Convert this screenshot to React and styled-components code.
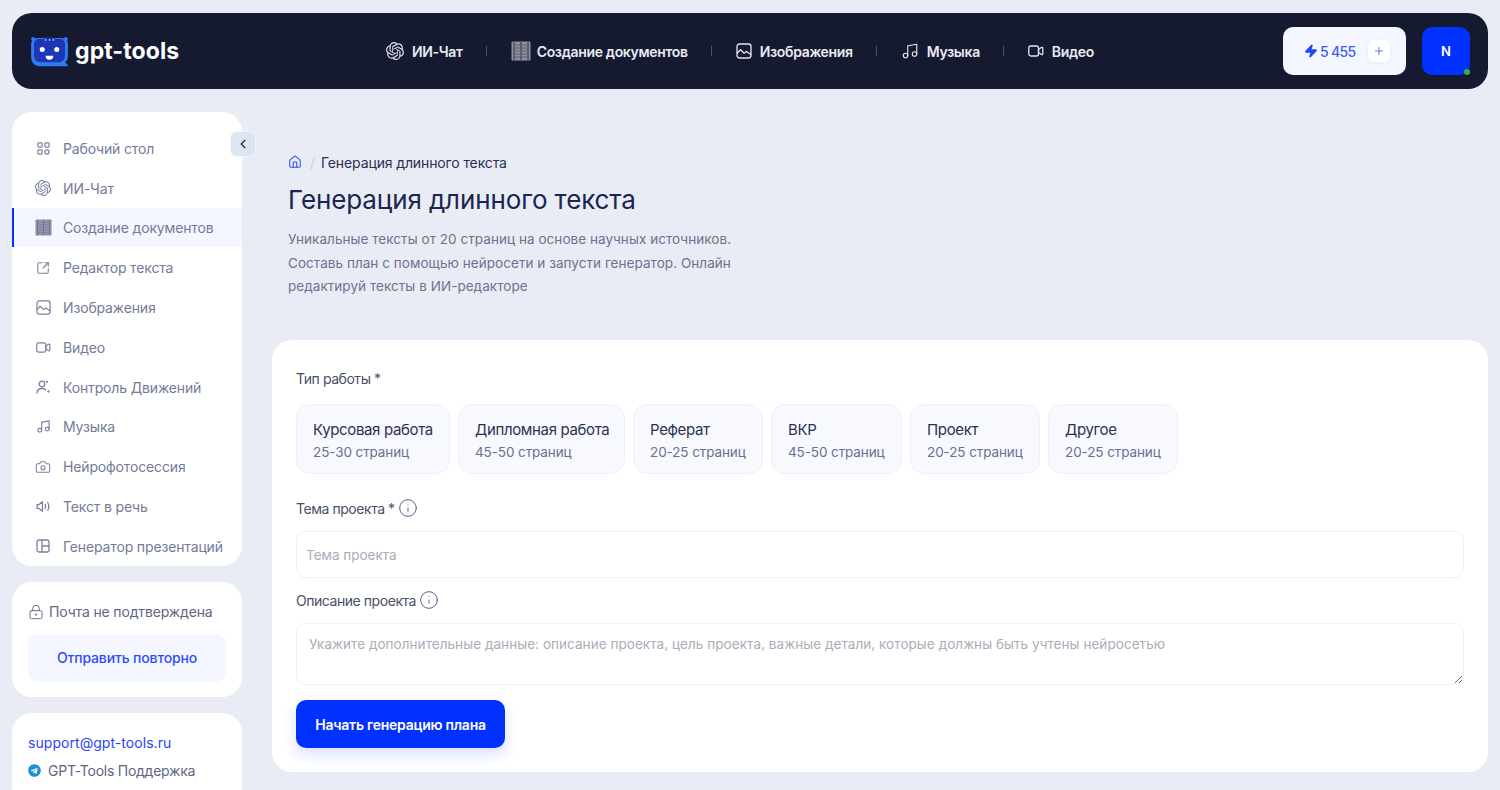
import React from "react";
import styled, { createGlobalStyle } from "styled-components";
import { SiOpenai } from "react-icons/si";
import { FaTelegram } from "react-icons/fa";
import {
  Camera,
  ChevronLeft,
  Info,
  LockKeyhole,
  Music,
  Plus,
  SquareArrowOutUpRight,
  Zap,
  House,
} from "lucide-react";

const GlobalStyle = createGlobalStyle`
  html, body {
    margin: 0;
    height: 790px;
    overflow: hidden;
    background: #e9ecf4;
    font-family: "Inter", "Noto Sans", sans-serif;
    color: #1c2340;
  }
  * { box-sizing: border-box; }
`;

const Page = styled.div`
  padding: 13px 12px 0;
`;

const Header = styled.header`
  height: 76px;
  background: #151a30;
  border-radius: 20px;
  padding: 0 18px;
  display: flex;
  align-items: center;
  justify-content: space-between;
`;

const LogoWrap = styled.div`
  display: flex;
  align-items: center;
  gap: 6px;
  width: 167px;
  color: #fff;
  font-weight: 700;
  font-size: 23px;
  letter-spacing: 0.1px;
`;

const TopNav = styled.nav`
  display: flex;
  align-items: center;
`;

const TopLink = styled.a`
  display: flex;
  align-items: center;
  gap: ${(p) => p.$gap || 8}px;
  color: #e9ebf2;
  font-size: 14px;
  font-weight: 600;
  letter-spacing: -0.33px;
  white-space: nowrap;
`;

const TopSep = styled.span`
  width: 1px;
  height: 10px;
  background: #4a5272;
  margin: 0 24px 0 23px;
`;

const HeaderRight = styled.div`
  display: flex;
  gap: 16px;
`;

const Balance = styled.div`
  width: 123px;
  height: 48px;
  background: #f4f7ff;
  border-radius: 10px;
  padding: 0 16px 0 21px;
  display: flex;
  align-items: center;
  justify-content: space-between;
  color: #3f5cf0;
  font-size: 14px;
  font-weight: 500;
  letter-spacing: -0.7px;
`;

const BalanceValue = styled.span`
  display: flex;
  align-items: center;
  gap: 2px;
`;

const PlusButton = styled.span`
  width: 22px;
  height: 22px;
  border-radius: 6px;
  background: #fff;
  display: flex;
  align-items: center;
  justify-content: center;
  box-shadow: 0 1px 4px rgba(70, 90, 200, 0.08);
`;

const Avatar = styled.div`
  position: relative;
  width: 48px;
  height: 48px;
  border-radius: 10px;
  background: #0031ff;
  color: #fff;
  font-size: 13px;
  font-weight: 600;
  display: flex;
  align-items: center;
  justify-content: center;
`;

const OnlineDot = styled.span`
  position: absolute;
  right: 0;
  bottom: 0;
  width: 6px;
  height: 6px;
  border-radius: 50%;
  background: #2fb344;
`;

const Columns = styled.div`
  display: flex;
  gap: 30px;
  margin-top: 23px;
  align-items: flex-start;
`;

const Aside = styled.aside`
  position: relative;
  width: 230px;
  flex: none;
  display: flex;
  flex-direction: column;
  gap: 16px;
`;

const SideCard = styled.div`
  background: #fff;
  border-radius: 20px;
  padding: ${(p) => p.$pad || "16px"};
`;

const MenuRow = styled.a`
  height: 39.8px;
  display: flex;
  align-items: center;
  gap: 13px;
  padding: 1px 0 0 22px;
  font-size: 14px;
  font-weight: 400;
  letter-spacing: -0.15px;
  color: #747a9a;
  white-space: nowrap;
  background: ${(p) => (p.$active ? "#f4f7ff" : "transparent")};
  border-left: 2px solid ${(p) => (p.$active ? "#0031ff" : "transparent")};
`;

const MenuIcon = styled.span`
  width: 14px;
  height: 16px;
  display: flex;
  align-items: center;
  justify-content: center;
  flex: none;
  & > svg {
    flex: none;
  }
`;

const Collapse = styled.button`
  position: absolute;
  top: 19px;
  right: -14px;
  width: 26px;
  height: 26px;
  padding: 0;
  border-radius: 7px;
  border: 1px solid #f2f5fa;
  background: #dde6f0;
  color: #1c2340;
  display: flex;
  align-items: center;
  justify-content: center;
`;

const MailNote = styled.div`
  display: flex;
  align-items: center;
  gap: 5px;
  color: #5f6684;
  font-size: 14px;
  letter-spacing: -0.15px;
  height: 20px;
`;

const ResendButton = styled.button`
  width: 198px;
  height: 48px;
  margin-top: 12px;
  border: 0;
  border-radius: 10px;
  background: #f4f7ff;
  color: #2e4df5;
  font: 500 14px "Inter", sans-serif;
  letter-spacing: -0.15px;
`;

const SupportMail = styled.div`
  color: #2b45f5;
  font-size: 14px;
  letter-spacing: 0.05px;
`;

const SupportChat = styled.div`
  display: flex;
  align-items: center;
  gap: 7px;
  margin-top: 11px;
  color: #5f6684;
  font-size: 14px;
  letter-spacing: -0.25px;
`;

const Main = styled.main`
  flex: 1;
  min-width: 0;
`;

const Intro = styled.section`
  padding: 41px 0 0 16px;
  height: 228px;
`;

const Crumbs = styled.div`
  display: flex;
  align-items: center;
  font-size: 14px;
  font-weight: 400;
  letter-spacing: -0.12px;
  height: 18px;
  color: #2a3050;
`;

const CrumbSlash = styled.span`
  color: #c6cfe3;
  margin: 0 6px 0 8px;
`;

const Title = styled.h1`
  margin: 10px 0 0;
  font-size: 26px;
  line-height: 38px;
  font-weight: 400;
  letter-spacing: -0.12px;
  color: #1a2550;
`;

const Lead = styled.p`
  margin: 9px 0 0;
  width: 450px;
  font-size: 13.5px;
  line-height: 23.5px;
  letter-spacing: 0.05px;
  color: #6b7390;
`;

const FormCard = styled.form`
  background: #fff;
  border-radius: 20px;
  height: 432px;
  padding: 28px 24px 0;
`;

const Label = styled.label`
  display: flex;
  align-items: center;
  gap: 3px;
  height: 20px;
  font-size: 14px;
  letter-spacing: -0.45px;
  color: #4a5068;
`;

const Chips = styled.div`
  display: flex;
  gap: 8px;
  margin: 16px 0 24px;
`;

const Chip = styled.div`
  height: 70px;
  width: ${(p) => p.$w}px;
  padding: 15px 0 0 16px;
  background: #f8f9ff;
  border: 1px solid #eef0fc;
  border-radius: 14px;
  white-space: nowrap;
`;

const ChipTitle = styled.div`
  font-size: 15px;
  line-height: 20px;
  letter-spacing: -0.35px;
  color: #2c3150;
`;

const ChipNote = styled.div`
  margin-top: 3px;
  font-size: 13.5px;
  line-height: 18px;
  letter-spacing: -0.1px;
  color: #69708f;
`;

const TextInput = styled.input`
  display: block;
  width: 100%;
  height: 47px;
  margin: 13px 0 12px;
  padding: 0 9px;
  border: 1px solid #f0f1f8;
  border-radius: 10px;
  background: #fff;
  font: 13.5px "Inter", sans-serif;
  outline: none;
  &::placeholder { color: #a9adb8; }
`;

const TextArea = styled.textarea`
  display: block;
  width: 100%;
  height: 62px;
  margin: 13px 0 15px;
  padding: 12px;
  border: 1px solid #f0f1f8;
  border-radius: 10px;
  background: #fff;
  font: 13.5px "Inter", sans-serif;
  letter-spacing: 0.055px;
  outline: none;
  &::placeholder { color: #a9adb8; }
`;

const StartButton = styled.button`
  width: 209px;
  height: 48px;
  border: 0;
  border-radius: 10px;
  background: #0031ff;
  color: #fff;
  font: 600 14px "Inter", sans-serif;
  letter-spacing: -0.25px;
  box-shadow: 0 6px 14px rgba(0, 49, 255, 0.16);
`;

const LogoMark = () => (
  <svg width="39" height="31" viewBox="0 0 40 32">
    <circle cx="3" cy="3" r="2" fill="#2f7bf5" />
    <circle cx="37" cy="3" r="2" fill="#2f7bf5" />
    <path d="M7 2h26a6 6 0 0 1 6 6v13a7 7 0 0 1-3 6l3 3a.8.8 0 0 1-.6 1.300H10a9 9 0 0 1-9-9V8a6 6 0 0 1 6-6z" fill="#2f7bf5" />
    <path d="M14 3l1-1.500h10l1 1.500h5a5 5 0 0 1 5 5v13a6 6 0 0 1-6 6H10a6 6 0 0 1-6-6V8a5 5 0 0 1 5-5z" fill="#1c36b4" />
    <circle cx="16" cy="4" r=".9" fill="#a9c4ff" />
    <circle cx="20" cy="4" r=".9" fill="#a9c4ff" />
    <circle cx="24" cy="4" r=".9" fill="#a9c4ff" />
    <circle cx="12.500" cy="14" r="2.600" fill="#fff" />
    <circle cx="27.500" cy="14" r="2.600" fill="#fff" />
    <path d="M16 20.500h8a4 4 0 0 1-8 0z" fill="#fff" />
  </svg>
);

const DocsIcon = ({ size, color, line }) => (
  <svg width={size} height={size} viewBox="0 0 20 20">
    <rect x=".5" y=".5" width="19" height="19" rx="1" fill={color} />
    <g stroke={line} strokeWidth="1">
      <path d="M10 1v18M3 1v18M17 1v18" />
      <path d="M4 4h5M4 7h5M4 10h5M4 13h5M4 16h5M11 4h5M11 7h5M11 10h5M11 13h5M11 16h5" opacity=".5" />
    </g>
  </svg>
);

const ImageIcon = ({ size = 16, color }) => (
  <svg width={size} height={size} viewBox="0 0 16 16" fill="none" stroke={color} strokeWidth="1.300" strokeLinejoin="round" strokeLinecap="round">
    <rect x="1" y="1" width="14" height="14" rx="2.500" />
    <path d="M1.200 10l3.300-3.300 3.500 3.500 2.500-1.700 4.300 3" />
  </svg>
);

const VideoIcon = ({ size = 16, color }) => (
  <svg width={size} height={size} viewBox="0 0 16 16" fill="none" stroke={color} strokeWidth="1.300" strokeLinejoin="round">
    <rect x=".8" y="3" width="9.700" height="10" rx="2" />
    <path d="M10.500 6.500L13 4.800a1 1 0 0 1 1.800.8v4.800a1 1 0 0 1-1.800.8L10.500 9.500z" />
  </svg>
);

const GridIcon = ({ color }) => (
  <svg width="13" height="13" viewBox="0 0 14 14" fill="none" stroke={color} strokeWidth="1.300">
    <rect x="1" y="1" width="4.500" height="4.500" rx=".8" />
    <rect x="8.500" y="1" width="4.500" height="4.500" rx=".8" />
    <rect x="1" y="8.500" width="4.500" height="4.500" rx=".8" />
    <circle cx="10.750" cy="10.750" r="2.250" />
  </svg>
);

const MotionIcon = ({ color }) => (
  <svg width="14" height="14" viewBox="0 0 14 14" fill="none" stroke={color} strokeWidth="1.300" strokeLinecap="round">
    <circle cx="6" cy="4" r="2.800" />
    <path d="M1 13c.3-3 2.400-4.500 5-4.500 1.500 0 2.700.4 3.600 1.300" />
    <circle cx="11" cy="1.800" r=".5" />
    <circle cx="12.500" cy="11.500" r=".5" />
  </svg>
);

const SpeechIcon = ({ color }) => (
  <svg width="15" height="15" viewBox="0 0 14 14" fill="none" stroke={color} strokeWidth="1.200" strokeLinejoin="round" strokeLinecap="round">
    <path d="M1 5.200h1.800L6 2.500v9L2.800 8.800H1z" />
    <path d="M8.500 5c.6 1.300.6 2.700 0 4M11 3.500c1.200 2.300 1.200 4.700 0 7" />
  </svg>
);

const SlidesIcon = ({ color }) => (
  <svg width="14" height="14" viewBox="0 0 14 14" fill="none" stroke={color} strokeWidth="1.300" strokeLinejoin="round">
    <rect x="1" y="1" width="12" height="12" rx="2" />
    <path d="M6 1v12M6 7h7" />
  </svg>
);

const muted = "#7b81a0";

const topLinks = [
  { label: "ИИ-Чат", icon: <SiOpenai size={18} color="#dfe2ea" /> },
  { label: "Создание документов", gap: 6, icon: <DocsIcon size={20} color="#8d909c" line="#2a2e40" /> },
  { label: "Изображения", icon: <ImageIcon color="#e4e6ee" /> },
  { label: "Музыка", icon: <Music size={18} color="#e4e6ee" strokeWidth={1.500} /> },
  { label: "Видео", icon: <VideoIcon color="#e4e6ee" /> },
];

const menu = [
  { label: "Рабочий стол", icon: <GridIcon color={muted} /> },
  { label: "ИИ-Чат", icon: <SiOpenai size={16} color={muted} /> },
  { label: "Создание документов", icon: <DocsIcon size={17} color="#9196ae" line="#666b88" />, active: true },
  { label: "Редактор текста", icon: <SquareArrowOutUpRight size={14} color={muted} strokeWidth={1.900} /> },
  { label: "Изображения", icon: <ImageIcon size={15} color={muted} /> },
  { label: "Видео", icon: <VideoIcon size={15} color={muted} /> },
  { label: "Контроль Движений", icon: <MotionIcon color={muted} /> },
  { label: "Музыка", icon: <Music size={15} color={muted} strokeWidth={1.800} /> },
  { label: "Нейрофотосессия", icon: <Camera size={16} color={muted} strokeWidth={1.600} /> },
  { label: "Текст в речь", icon: <SpeechIcon color={muted} /> },
  { label: "Генератор презентаций", icon: <SlidesIcon color={muted} /> },
];

const workTypes = [
  { title: "Курсовая работа", note: "25-30 страниц", w: 154 },
  { title: "Дипломная работа", note: "45-50 страниц", w: 167 },
  { title: "Реферат", note: "20-25 страниц", w: 130 },
  { title: "ВКР", note: "45-50 страниц", w: 131 },
  { title: "Проект", note: "20-25 страниц", w: 130 },
  { title: "Другое", note: "20-25 страниц", w: 130 },
];

export default function App() {
  return (
    <Page>
      <GlobalStyle />
      <Header>
        <LogoWrap>
          <LogoMark />
          gpt-tools
        </LogoWrap>
        <TopNav>
          {topLinks.map((link, i) => (
            <React.Fragment key={link.label}>
              {i > 0 && <TopSep />}
              <TopLink $gap={link.gap}>
                {link.icon}
                {link.label}
              </TopLink>
            </React.Fragment>
          ))}
        </TopNav>
        <HeaderRight>
          <Balance>
            <BalanceValue>
              <Zap size={14} fill="#2446f5" color="#2446f5" />5 455
            </BalanceValue>
            <PlusButton>
              <Plus size={12} color="#5b74ee" strokeWidth={2} />
            </PlusButton>
          </Balance>
          <Avatar>
            N
            <OnlineDot />
          </Avatar>
        </HeaderRight>
      </Header>

      <Columns>
        <Aside>
          <SideCard $pad="16px 0 0">
            {menu.map((item) => (
              <MenuRow key={item.label} $active={item.active}>
                <MenuIcon>{item.icon}</MenuIcon>
                {item.label}
              </MenuRow>
            ))}
          </SideCard>
          <Collapse type="button">
            <ChevronLeft size={14} strokeWidth={2.200} />
          </Collapse>
          <SideCard $pad="20px 16px 15px">
            <MailNote>
              <LockKeyhole size={16} strokeWidth={1.400} />
              Почта не подтверждена
            </MailNote>
            <ResendButton type="button">Отправить повторно</ResendButton>
          </SideCard>
          <SideCard $pad="21px 16px 30px">
            <SupportMail>support@gpt-tools.ru</SupportMail>
            <SupportChat>
              <FaTelegram size={13} color="#1f8fd6" />
              GPT-Tools Поддержка
            </SupportChat>
          </SideCard>
        </Aside>

        <Main>
          <Intro>
            <Crumbs>
              <House size={14} color="#2e4df5" strokeWidth={1.800} />
              <CrumbSlash>/</CrumbSlash>
              Генерация длинного текста
            </Crumbs>
            <Title>Генерация длинного текста</Title>
            <Lead>
              Уникальные тексты от 20 страниц на основе научных источников.
              <br />
              Составь план с помощью нейросети и запусти генератор. Онлайн
              <br />
              редактируй тексты в ИИ-редакторе
            </Lead>
          </Intro>

          <FormCard>
            <Label>Тип работы *</Label>
            <Chips>
              {workTypes.map((t) => (
                <Chip key={t.title} $w={t.w}>
                  <ChipTitle>{t.title}</ChipTitle>
                  <ChipNote>{t.note}</ChipNote>
                </Chip>
              ))}
            </Chips>
            <Label>
              Тема проекта * <Info size={20} strokeWidth={1.100} color="#4a5580" />
            </Label>
            <TextInput placeholder="Тема проекта" />
            <Label>
              Описание проекта <Info size={20} strokeWidth={1.100} color="#4a5580" />
            </Label>
            <TextArea placeholder="Укажите дополнительные данные: описание проекта, цель проекта, важные детали, которые должны быть учтены нейросетью" />
            <StartButton type="button">Начать генерацию плана</StartButton>
          </FormCard>
        </Main>
      </Columns>
    </Page>
  );
}
